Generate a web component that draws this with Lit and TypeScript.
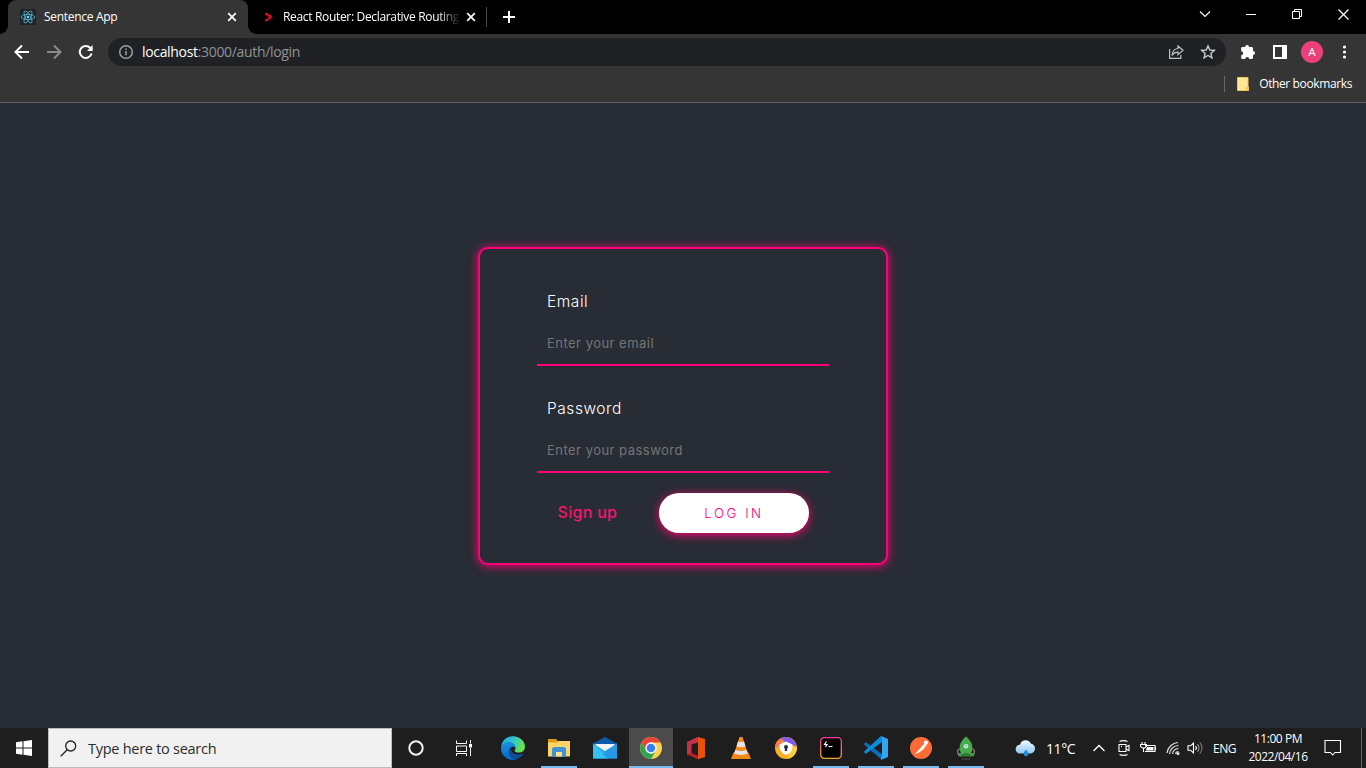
import { LitElement, html, svg, css } from "lit";
import { customElement } from "lit/decorators.js";

const line = (d: string, size = 16, w = 1.5) =>
  html`<svg width=${size} height=${size} viewBox="0 0 16 16" fill="none" stroke="currentColor" stroke-width=${w}><path d=${d} /></svg>`;

const reactLogo = html`<svg width="16" height="16" viewBox="0 0 16 16">
  <rect width="16" height="16" rx="1.5" fill="#20232a" />
  <g fill="none" stroke="#53b9d1" stroke-width=".8">
    <ellipse cx="8" cy="8" rx="6.7" ry="2.6" />
    <ellipse cx="8" cy="8" rx="6.7" ry="2.6" transform="rotate(60 8 8)" />
    <ellipse cx="8" cy="8" rx="6.7" ry="2.6" transform="rotate(120 8 8)" />
  </g>
  <circle cx="8" cy="8" r="1.3" fill="#61dafb" />
</svg>`;

const close = line("M1.2 1.2 8.8 8.8M8.8 1.2 1.2 8.8", 16, 1.7);

@customElement("browser-chrome")
class BrowserChrome extends LitElement {
  static styles = css`
    :host { display: block; height: 103px; color: #fff; font: 12px "Open Sans", "Noto Sans", sans-serif; }
    * { box-sizing: border-box; }
    svg { display: block; flex: none; }
    .strip { height: 34px; background: #000; display: flex; }
    .tab { height: 34px; display: flex; align-items: center; padding-left: 12px; }
    .active { position: relative; margin-left: 8px; width: 240px; background: #353535; border-radius: 8px 8px 0 0; }
    .active::before, .active::after { content: ""; position: absolute; bottom: 0; width: 8px; height: 8px; }
    .active::before { left: -8px; background: radial-gradient(circle at 0 0, #000 7.5px, #353535 8px); }
    .active::after { right: -8px; background: radial-gradient(circle at 100% 0, #000 7.5px, #353535 8px); }
    .title { margin-left: 8px; width: 176px; letter-spacing: -0.3px; white-space: nowrap; overflow: hidden; line-height: 18px; }
    .fade { margin-left: 7px; letter-spacing: -0.33px; mask-image: linear-gradient(90deg, #000 88%, transparent 101%); }
    .x { margin-left: 7px; width: 10px; height: 10px; overflow: hidden; }
    .split { width: 1px; height: 20px; margin: 7px 16px 0 10px; background: #4a4a4a; }
    .plus { padding-top: 11px; }
    .spacer { flex: 1; }
    .win { width: 46px; height: 28px; display: grid; place-items: center; }
    .bar { height: 34px; background: #353535; display: flex; align-items: center; padding: 2px 0 0 14px; }
    .nav { width: 32px; }
    .dim { color: #8b8b8b; }
    .omni { width: 1118px; height: 28px; margin-left: -2px; border-radius: 14px; background: #202124; display: flex; align-items: center; padding: 0 10px; }
    .url { margin-left: 8px; font-size: 14px; color: #8f9398; letter-spacing: -0.33px; line-height: 20px; }
    .url b { font-weight: 400; color: #fff; }
    .share { color: #bfc1c4; margin-right: 16px; }
    .ext { margin-left: 14px; }
    .panel { margin-left: 16px; }
    .avatar { width: 22px; height: 22px; border-radius: 50%; background: #ec407a; display: grid; place-items: center; margin-left: 13px; font: 11.5px Roboto, sans-serif; }
    .dots { margin-left: 13px; }
    .marks { height: 35px; background: #353535; border-bottom: 1px solid #5f6062; display: flex; justify-content: flex-end; align-items: center; padding: 0 14px 2px 0; }
    .rule { width: 1px; height: 16px; background: #686868; margin-right: 12px; }
    .marks span { margin-left: 10px; letter-spacing: -0.38px; line-height: 16px; padding-bottom: 1px; }
  `;
  render() {
    return html`
      <div class="strip">
        <div class="tab active">${reactLogo}<div class="title">Sentence App</div><div class="x">${close}</div></div>
        <div class="tab">
          <svg width="16" height="16" viewBox="0 0 16 16" fill="#e10b23"><path d="M5 3.7h2.5L9.4 6H11l1 2-1 1.8H9.4l-1.9 2.4H5v-1.8l2.3-1L9 8 7.3 6.8 5 5.7z" /></svg>
          <div class="title fade">React Router: Declarative Routing</div><div class="x">${close}</div>
        </div>
        <div class="split"></div>
        <div class="plus"><svg width="12" height="12" viewBox="0 0 12 12" fill="none" stroke="#fff" stroke-width="2"><path d="M6 0v12M0 6h12" /></svg></div>
        <div class="spacer"></div>
        <div class="win"><svg width="12" height="12" fill="none" stroke="#fff" stroke-width="1.100"><path d="M1 3.500 6 8.500 11 3.500" /></svg></div>
        <div class="win"><svg width="10" height="10" stroke="#fff"><path d="M0 5.500h10" /></svg></div>
        <div class="win"><svg width="10" height="10" fill="none" stroke="#fff"><path d="M.5 2.500h7v7h-7zM2.500 2V.5h7v7H8" /></svg></div>
        <div class="win"><svg width="11" height="11" fill="none" stroke="#fff" stroke-width="1.200"><path d="m.5.5 10 10m0-10-10 10" /></svg></div>
      </div>
      <div class="bar">
        <div class="nav">${line("M15 8H2M8 1.5 1.5 8 8 14.5", 16, 2)}</div>
        <div class="nav dim">${line("M1 8h13M8 1.5 14.5 8 8 14.5", 16, 2)}</div>
        <div class="nav"><svg width="16" height="16" viewBox="0 0 16 16" fill="none" stroke="#fff" stroke-width="2"><path d="M13.6 9.5A6 6 0 1 1 12.2 3.8L14 5.6" /><path d="M14.6 1v6H9z" fill="#fff" stroke="none" /></svg></div>
        <div class="omni">
          <svg width="16" height="16" viewBox="0 0 16 16" fill="none" stroke="#9aa0a6" stroke-width="1.5"><circle cx="8" cy="8" r="6.3" /><path d="M8 7v4.3M8 4.4V6" /></svg>
          <div class="url"><b>localhost</b>:3000/auth/login</div>
          <div class="spacer"></div>
          <svg class="share" width="16" height="16" viewBox="0 0 16 16" fill="none" stroke="currentColor" stroke-width="1.2"><path d="M1.6 5v9.4h11.2V11M10 2l5 4.3-5 4.3V8.2C7.500 8.200 5.500 9 4 11.300 4.300 7.500 6.500 4.900 10 4.500z" /></svg>
          <svg width="16" height="16" viewBox="0 0 16 16" fill="none" stroke="#c8cacd" stroke-width="1.4"><path d="m8 1.900 1.800 4.100 4.500.4-3.400 3 1 4.400L8 11.500l-3.900 2.300 1-4.400-3.400-3 4.500-.4z" /></svg>
        </div>
        <svg class="ext" width="16" height="16" viewBox="0 0 16 16" fill="#fff"><path d="M2.500 3H5.200a1.900 1.900 0 0 1 3.800 0h2.700A1.300 1.300 0 0 1 13 4.300V7a2 2 0 0 1 0 4v2.700a1.300 1.300 0 0 1-1.300 1.300H9.200a2 2 0 0 0-4 0H2.500a1.300 1.300 0 0 1-1.300-1.300v-2.500a2 2 0 0 0 0-4V4.300A1.300 1.300 0 0 1 2.500 3z" /></svg>
        <svg class="panel" width="16" height="16" viewBox="0 0 16 16"><path d="M2 2h12v12H2z" fill="none" stroke="#fff" stroke-width="2" /><path d="M10 2h4v12h-4z" fill="#fff" /></svg>
        <div class="avatar">A</div>
        <svg class="dots" width="16" height="16" viewBox="0 0 16 16" fill="#fff"><circle cx="8.500" cy="3" r="1.600" /><circle cx="8.500" cy="8" r="1.600" /><circle cx="8.500" cy="13" r="1.600" /></svg>
      </div>
      <div class="marks">
        <div class="rule"></div>
        <svg width="12" height="14"><path d="M.5.500h10.500v9.500h.5v3.500H.5z" fill="#ffe694" stroke="#e9c85c" /><path d="M9 10h2.500v3.500H9z" fill="#edc951" /></svg>
        <span>Other bookmarks</span>
      </div>`;
  }
}

@customElement("login-card")
class LoginCard extends LitElement {
  static styles = css`
    :host { display: block; }
    * { box-sizing: border-box; }
    form { width: 410px; height: 318px; border: 2px solid #f07; border-radius: 10px; padding: 38px 57px 0; box-shadow: 0 1px 10px #f07; background: #282c34; font-family: Inter, sans-serif; color: #fff; }
    label { display: block; height: 30px; padding-left: 10px; font-size: 15.5px; line-height: 30px; font-weight: 300; letter-spacing: 0.55px; }
    input { display: block; width: 100%; height: 37px; margin: 12px 0 28px; padding: 0 10px 7px; border: 0; border-bottom: 2px solid #f07; background: none; outline: 0; font: 13px Inter, sans-serif; letter-spacing: 0.48px; }
    input.last { margin-bottom: 20px; }
    input::placeholder { color: #757575; opacity: 1; }
    .row { display: flex; align-items: center; }
    .link { width: 122px; padding: 0 0 2px 20.5px; color: #f5146e; font-size: 16px; font-weight: 500; letter-spacing: 0.3px; }
    button { width: 150px; height: 40px; border: 0; border-radius: 20px; padding: 0; background: #fff; color: #f07; font: 300 13.3px Inter, sans-serif; letter-spacing: 2.5px; box-shadow: 0 2px 10px #f07; }
  `;
  render() {
    return html`<form>
      <label>Email</label><input placeholder="Enter your email" />
      <label>Password</label><input class="last" placeholder="Enter your password" />
      <div class="row"><span class="link">Sign up</span><button type="button">LOG IN</button></div>
    </form>`;
  }
}

const pic = (body: unknown) => html`<svg width="24" height="24" viewBox="0 0 24 24">${body}</svg>`;

const edge = pic(svg`
  <defs>
    <linearGradient id="e1" x1="0" y1="0" x2="1" y2=".3"><stop offset="0" stop-color="#1ea5e0" /><stop offset=".55" stop-color="#32c7cb" /><stop offset="1" stop-color="#6be04b" /></linearGradient>
    <linearGradient id="e2" x1="0" y1="0" x2="0" y2="1"><stop offset="0" stop-color="#1a91de" /><stop offset="1" stop-color="#0a66c6" /></linearGradient>
  </defs>
  <path d="M.2 10.500C1.200 4 6 .2 12 .2 19 .2 24 5.400 24 10.700c0 3.700-2.900 5.800-6.200 5.800-2.700 0-4.200-.9-4.200-1.800 0-.6.900-1 .9-2.700 0-2.600-2.800-4.700-6-4.700-4 0-7.200 2-8.300 3.200z" fill="url(#e1)" />
  <path d="M0 12.300C0 8.500 4 6 8.300 6c3.300 0 6.200 2.500 6.200 5.500-3.300-2-7.200.8-6.500 4.700.6 4.100 3.800 6.800 7 7.300-1 .4-2 .5-3 .5-6.800 0-12-5.300-12-11.700z" fill="url(#e2)" />
  <path d="M9.500 11.800c-4 4.500-.5 10.700 5 11.800 3.600-.7 6-2.700 7.800-5.500.3-.6-.2-.9-.7-.6-5.200 2.400-11.700.2-12.100-5.700z" fill="#114b94" />`);

const explorer = pic(svg`
  <path d="M1 3h8l2 2h11v5H1z" fill="#e19b13" /><path d="M1 6.500h9L12 5h11v15.500H1z" fill="#ffd567" />
  <path d="M5 21v-8.500l1.500-1.500h11l1.500 1.500V21h-4v-5H9v5z" fill="#3f93d2" /><path d="M9 16h6v4.500H9z" fill="#ffe08c" />`);

const mail = pic(svg`
  <path d="M0 7.500 12 1l12 6.500V12H0z" fill="#0d5aa7" /><path d="M2.500 8h19v8h-19z" fill="#f3f3f5" />
  <path d="M0 7.500 12 15 24 7.500V22.500H0z" fill="#2ba9ec" /><path d="M0 7.500 16 22.500H0z" fill="#35c1f1" /><path d="M24 7.500 9 18l5 4.500h10z" fill="#1f8fe0" opacity=".6" />`);

const chrome = pic(svg`
  <circle cx="12" cy="12" r="11" fill="#fdd14c" />
  <path d="M2.500 6.500A11 11 0 0 1 21.500 6.500H12L7.200 14.700z" fill="#e94335" />
  <path d="M2.500 6.500A11 11 0 0 0 12 23L16.800 14.800 7.200 14.800z" fill="#34a350" />
  <circle cx="12" cy="12" r="5.700" fill="#fff" /><circle cx="12" cy="12" r="4.300" fill="#3b7ded" />`);

const office = pic(svg`
  <path d="M3 6 14 .8v5.600L7.500 8.500v8.700L3 19z" fill="#c5304b" /><path d="M14 1l7 2v18l-7 2.200z" fill="#e8520e" /><path d="M3 18.500 7.500 17l6.500 2.800v3.400z" fill="#bb1d27" />`);

const vlc = pic(svg`
  <path d="M4.500 16.500h15L22 23H2z" fill="#f08a16" /><path d="M10.500 1h3L19 18c-3.500 2.600-10.500 2.600-14 0z" fill="#f58b1a" />
  <path d="m9 5.500-1.500 4.700c2.700 1.300 6.300 1.300 9 0L15 5.500c-1.700.8-4.300.8-6 0zM6.400 13.700l-1.200 3.600c3.400 2.200 10.200 2.200 13.600 0l-1.200-3.600c-3.200 1.800-8 1.800-11.200 0z" fill="#e4e4e6" />`);

const vault = pic(svg`
  <circle cx="12" cy="12" r="11" fill="#f8ae25" /><path d="M6.500 2.500a11 11 0 0 1 16.200 7.700L13 8z" fill="#8259ed" /><path d="M1 12A11 11 0 0 1 8 1.800L9 10z" fill="#fa7852" /><path d="M23 11c0 6-4 10.500-9 11.800L17 11z" fill="#f6d13d" />
  <path d="M5.500 8.500 12 5.500l6.500 3c.5 5-2 9-6.500 10.500C7.500 17.500 5 13.500 5.500 8.500z" fill="#fff" /><circle cx="12" cy="11" r="2" fill="#292a4a" /><path d="M11.200 11h1.600l.5 4h-2.600z" fill="#292a4a" />`);

const hyper = pic(svg`
  <defs><linearGradient id="h" x2="0" y2="1"><stop stop-color="#ef3ca8" /><stop offset="1" stop-color="#f3a62f" /></linearGradient></defs>
  <rect x="1.700" y="1.700" width="20.600" height="20.600" rx="3.500" fill="#000" stroke="url(#h)" stroke-width="1.300" />
  <path d="M7.500 5.500 5.500 8.500H8L6.500 11M9.500 10.500h4" fill="none" stroke="#fff" stroke-width="1.200" />`);

const code = pic(svg`
  <path d="M0 7.800 2 6.200 18 18.300V24L.6 9z" fill="#0b70bb" /><path d="M.6 15 17 0l1 6L2 17.800 0 16.200z" fill="#0b8bd8" /><path d="M17 0 24 3v18l-7 3 1-5.500v-13z" fill="#30a7f2" />`);

const postman = pic(svg`
  <circle cx="12" cy="12" r="11" fill="#ff6c37" />
  <path d="m5.500 18.500 7.700-8.200 2.200 2.200-5 3.800z" fill="#fff" /><circle cx="17" cy="6.700" r="2.100" fill="#fff" /><path d="m13 11 3.200-3.200.6 1.400-2.600 3" stroke="#fff" fill="none" stroke-width="1.300" />`);

const rocket = pic(svg`
  <path d="M6 12.500C3 13.500 3 16 5 20" fill="none" stroke="#a08f78" stroke-width="1.200" /><path d="M18 12.500c3 1 3 3.500 1 7.500" fill="none" stroke="#a08f78" stroke-width="1.200" />
  <path d="M4 17h4.500v3.500h-3zM20 17h-4.500v3.500h3z" fill="#3f9a47" />
  <path d="M12 .5C6.500 5 3.500 11 7.500 18h9C20.500 11 17.500 5 12 .5z" fill="#46ad4e" /><circle cx="12" cy="10.300" r="2.300" fill="#d5eadf" /><circle cx="12" cy="10.300" r="1" fill="#5ca" /><path d="M8 20.500h8l-2-3.500h-4z" fill="#2f8036" /><path d="M7.500 23h9" stroke="#555" />`);

const pinned: { icon: unknown; open?: boolean; focus?: boolean }[] = [
  { icon: edge }, { icon: explorer, open: true }, { icon: mail },
  { icon: chrome, open: true, focus: true }, { icon: office }, { icon: vlc }, { icon: vault },
  { icon: hyper, open: true }, { icon: code, open: true }, { icon: postman, open: true }, { icon: rocket, open: true },
];

@customElement("task-bar")
class TaskBar extends LitElement {
  static styles = css`
    :host { display: flex; height: 40px; background: #1e1e1e; color: #fff; font: 12px "Open Sans", "Noto Sans", sans-serif; }
    * { box-sizing: border-box; }
    svg { display: block; flex: none; }
    .cell { width: 48px; display: grid; place-items: center; }
    .search { width: 344px; background: #f1f1f1; border: 1px solid #bcbcbc; color: #2c2c2c; display: flex; align-items: center; padding-left: 11px; font-size: 14.5px; letter-spacing: -0.27px; }
    .search span { margin-left: 11px; }
    .apps { display: flex; padding-left: 2px; }
    .app { width: 44px; margin-right: 1px; display: grid; place-items: center; }
    .app:nth-child(-n + 3) { width: 46px; margin: 0; }
    .app:nth-child(3) { margin-right: 1px; }
    .open { background: linear-gradient(#76b9ed, #76b9ed) center bottom / 36px 2px no-repeat; }
    .focus { background: linear-gradient(#76b9ed, #76b9ed) center bottom / 100% 2px no-repeat #4b4b4b; }
    .spacer { flex: 1; }
    .tray { display: flex; align-items: center; }
    .temp { width: 30px; margin: 0 17px 0 9px; font-size: 14px; letter-spacing: -0.4px; white-space: nowrap; }
    .cam { margin-left: 13px; }
    .battery { margin-left: 10px; }
    .wifi { margin-left: 9px; }
    .volume { margin-left: 7px; }
    .lang { width: 24px; margin-left: 8px; letter-spacing: -0.45px; white-space: nowrap; }
    .clock { width: 62px; margin-left: 10px; text-align: center; line-height: 18px; letter-spacing: -0.45px; white-space: nowrap; }
    .note { margin-left: 15px; }
    .peek { width: 1px; height: 40px; background: #686868; margin: 0 4px 0 19px; }
  `;
  render() {
    return html`
      <div class="cell"><svg width="16" height="16" viewBox="0 0 16 16" fill="#fff"><path d="M0 2.300 6.500 1.300V7.500H0zM7.500 1.200 16 0v7.500H7.500zM0 8.500h6.500v6.200L0 13.700zM7.500 8.500H16V16l-8.500-1.200z" /></svg></div>
      <div class="search"><svg width="17" height="17" viewBox="0 0 17 17" fill="none" stroke="#222" stroke-width="1.300"><circle cx="10.700" cy="6" r="5" /><path d="M7.200 9.700.7 16.200" /></svg><span>Type here to search</span></div>
      <div class="cell"><svg width="16" height="16" fill="none" stroke="#f3f3f3" stroke-width="2"><circle cx="8" cy="8" r="6.700" /></svg></div>
      <div class="cell"><svg width="16" height="16" fill="none" stroke="#fff" stroke-width="1"><path d="M.5.500v3h10v-3M.5 6h10v5.500H.5zM.5 16v-2.500h10V16M14.500 0v3.500M14.500 8v8" /><path d="M13 4h3v3.500h-3z" fill="#fff" stroke="none" /></svg></div>
      <div class="apps">${pinned.map((p) => html`<div class="app ${p.focus ? "focus" : p.open ? "open" : ""}">${p.icon}</div>`)}</div>
      <div class="spacer"></div>
      <div class="tray">
        <svg width="22" height="18" viewBox="0 0 22 18"><defs><linearGradient id="c" x2="0" y2="1"><stop stop-color="#f3faff" /><stop offset="1" stop-color="#8cc8f5" /></linearGradient></defs><path d="M5 14.500a4.400 4.400 0 0 1 0-8.800 5.800 5.800 0 0 1 11-1 5 5 0 0 1 0 9.800z" fill="url(#c)" /><path d="M11 10.500c1.300 1.700 2.300 3 2.300 4.500a2.300 2.300 0 0 1-4.600 0c0-1.500 1-2.800 2.300-4.500z" fill="#1e88dd" /></svg>
        <span class="temp">11°C</span>
        <svg width="12" height="8" fill="none" stroke="#fff" stroke-width="1.300"><path d="m.5 7 5.500-5.500L11.500 7" /></svg>
        <svg class="cam" width="12" height="16" fill="none" stroke="#fff" stroke-width="1.100"><path d="M1.500 1.500c2-1.200 6-1.200 8 0M1.500 14.500c2 1.200 6 1.200 8 0M1 4.500h7v7H1zM8 7l3-1.500v5L8 9" /><path d="M3 6.500h1" /></svg>
        <svg class="battery" width="17" height="14" fill="none" stroke="#fff" stroke-width="1.100"><path d="M5 4.500h10v6H5M15.500 6v3M2 1v2.500M5 1v2.500M.5 3.500h6v2l-2 1.500h-2l-2-1.500zM3.500 7v4" /><path d="M7 6h6.500v3.500H6z" fill="#fff" stroke="none" /></svg>
        <svg class="wifi" width="14" height="14" fill="none" stroke="#ddd" stroke-width="1.200"><path d="M1 12A12 12 0 0 1 12 1.500M3.500 13A9 9 0 0 1 12.500 4.500M6.500 13A6.500 6.500 0 0 1 12.500 7.500M9.500 13a3 3 0 0 1 3-2.500" /><circle cx="12" cy="12.500" r="1" fill="#fff" /></svg>
        <svg class="volume" width="18" height="14" fill="none" stroke="#fff" stroke-width="1.100"><path d="M1 4.800h2.500L6.500 2v10L3.500 9.200H1zM8.500 5a3 3 0 0 1 0 4" /><path d="M10.500 3.300a5.500 5.500 0 0 1 0 7.400" stroke="#aaa" /><path d="M12.800 1.500a8 8 0 0 1 0 11" stroke="#777" /></svg>
        <span class="lang">ENG</span>
        <div class="clock">11:00 PM<br />2022/04/16</div>
        <svg class="note" width="18" height="18" fill="none" stroke="#fff" stroke-width="1.100"><path d="M1 1.500h15.500v12H11L8.700 16l-2.300-2.500H1z" /></svg>
        <div class="peek"></div>
      </div>`;
  }
}

@customElement("app-root")
class AppRoot extends LitElement {
  static styles = css`
    :host { display: flex; flex-direction: column; width: 1366px; height: 768px; overflow: hidden; background: #282c34; }
    main { flex: 1; display: grid; justify-content: center; align-content: start; padding-top: 144px; }
  `;
  render() {
    return html`<browser-chrome></browser-chrome><main><login-card></login-card></main><task-bar></task-bar>`;
  }
}
